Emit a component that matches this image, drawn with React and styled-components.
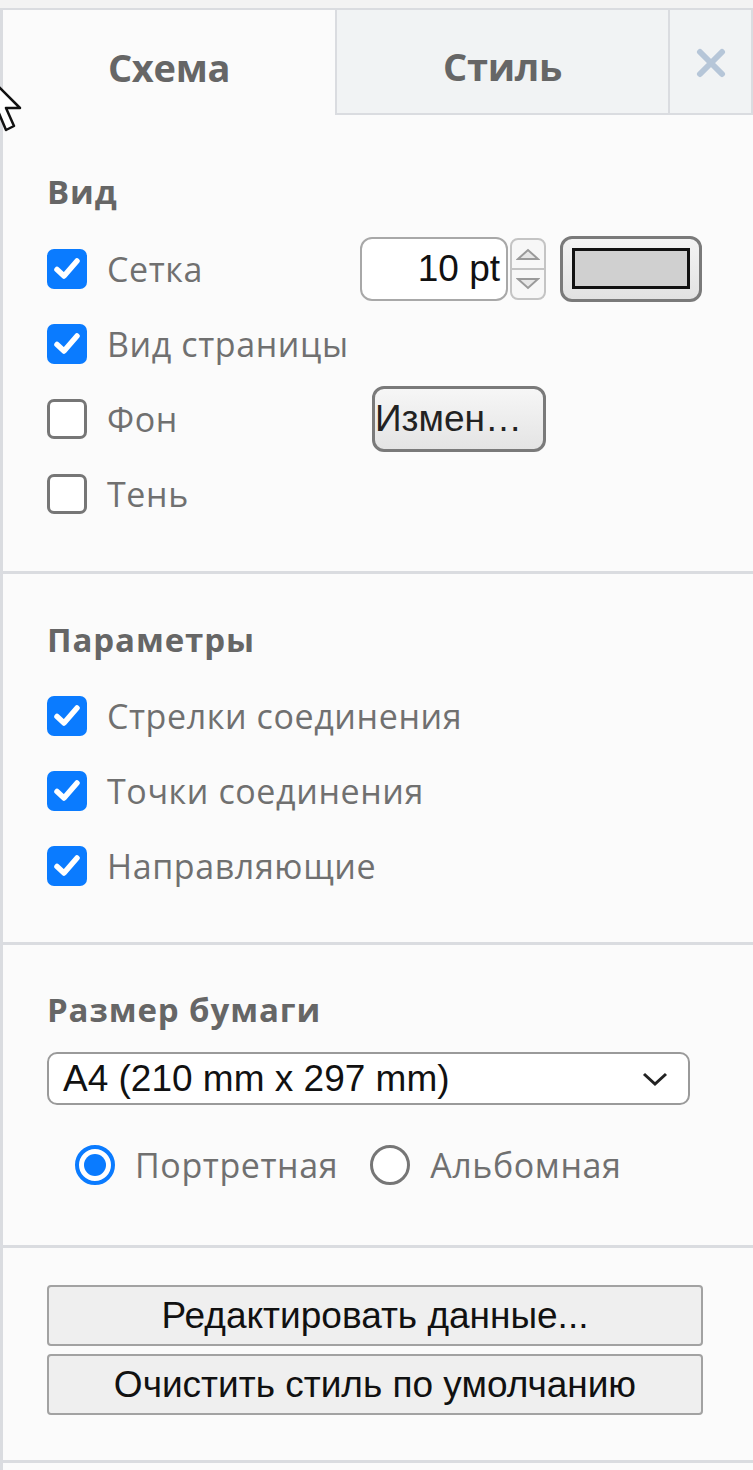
import React from 'react';
import styled, { createGlobalStyle } from 'styled-components';

const GlobalStyle = createGlobalStyle`
  html, body {
    margin: 0;
    padding: 0;
    background: #f3f3f3;
  }
  * { box-sizing: border-box; }
`;

const Page = styled.div`
  position: relative;
  width: 753px;
  height: 1470px;
  padding-top: 8px;
  background: #f3f3f3;
  overflow: hidden;
`;

const Panel = styled.div`
  height: 100%;
  background: #fbfbfb;
  border-top: 2px solid #dadce0;
  border-left: 3px solid #dadce0;
  font-family: "Open Sans", "Noto Sans", sans-serif;
`;

const Tabs = styled.div`
  display: flex;
  height: 105px;
`;

const Tab = styled.div`
  display: flex;
  align-items: center;
  justify-content: center;
  width: ${p => p.$w}px;
  padding-top: 8px;
  font-size: 38px;
  font-weight: 700;
  color: #666;
  letter-spacing: -0.3px;
  background: ${p => (p.$active ? '#fbfbfb' : '#f1f3f4')};
  border-left: ${p => (p.$active ? 'none' : '2px solid #dadce0')};
  border-bottom: ${p => (p.$active ? 'none' : '2px solid #dadce0')};
`;

const CloseTab = styled(Tab)`
  flex: 1;
  padding-top: 2px;
  border-right: 2px solid #dadce0;
`;

const Section = styled.div`
  padding: ${p => p.$top}px 0 ${p => p.$bottom}px 44px;
  border-bottom: 3px solid #dadce0;
`;

const Heading = styled.div`
  height: 40px;
  line-height: 40px;
  font-size: 33px;
  font-weight: 700;
  letter-spacing: 0.9px;
  color: #666;
  margin-bottom: ${p => p.$gap}px;
`;

const Row = styled.div`
  display: flex;
  align-items: center;
  height: 75px;
`;

const CheckLabel = styled.label`
  display: flex;
  align-items: center;
  width: ${p => (p.$wide ? 'auto' : '313px')};
  font-size: 34px;
  letter-spacing: 0.6px;
  color: #707070;
`;

const Box = styled.span`
  display: flex;
  align-items: center;
  justify-content: center;
  width: 40px;
  height: 40px;
  border-radius: 7px;
  margin-right: 20px;
  flex-shrink: 0;
  background: ${p => (p.$on ? '#0a7bff' : '#fff')};
  border: ${p => (p.$on ? 'none' : '3px solid #767676')};
`;

const NumberBox = styled.div`
  width: 148px;
  height: 64px;
  border: 2px solid #a8a8a8;
  border-radius: 12px;
  background: #fff;
  display: flex;
  align-items: center;
  justify-content: flex-end;
  padding-right: 6px;
  font-family: "Liberation Sans", Arial, sans-serif;
  font-size: 37px;
  color: #111;
`;

const Spinner = styled.div`
  display: flex;
  flex-direction: column;
  width: 36px;
  height: 62px;
  margin-left: 2px;
  border: 2px solid #c4c4c4;
  border-radius: 8px;
  background: #f7f7f7;
  overflow: hidden;
`;

const SpinHalf = styled.div`
  flex: 1;
  display: flex;
  align-items: center;
  justify-content: center;
  border-top: ${p => (p.$down ? '2px solid #c4c4c4' : 'none')};
`;

const ColorButton = styled.div`
  width: 142px;
  height: 66px;
  margin-left: 14px;
  border: 3px solid #7a7a7a;
  border-radius: 12px;
  background: linear-gradient(#f4f4f4, #e2e2e2);
  display: flex;
  align-items: center;
  justify-content: center;
`;

const Swatch = styled.div`
  width: 118px;
  height: 41px;
  background: #d0d0d0;
  border: 3px solid #111;
`;

const SmallButton = styled.div`
  width: 174px;
  height: 66px;
  margin-left: 12px;
  border: 3px solid #7a7a7a;
  border-radius: 12px;
  background: linear-gradient(#f6f6f6, #e4e4e4);
  display: flex;
  align-items: center;
  padding-left: 0;
  font-family: "Liberation Sans", Arial, sans-serif;
  font-size: 37px;
  color: #222;
  white-space: nowrap;
  overflow: hidden;
`;

const Select = styled.div`
  width: 643px;
  height: 53px;
  border: 2px solid #9a9a9a;
  border-radius: 10px;
  background: #fff;
  display: flex;
  align-items: center;
  justify-content: space-between;
  padding: 0 20px 0 14px;
  font-family: "Liberation Sans", Arial, sans-serif;
  font-size: 37px;
  color: #111;
`;

const RadioRow = styled.div`
  display: flex;
  align-items: center;
  height: 60px;
  margin-top: 30px;
  padding-left: 28px;
`;

const RadioLabel = styled.label`
  display: flex;
  align-items: center;
  margin-right: 32px;
  font-size: 34px;
  letter-spacing: 0.6px;
  color: #707070;
`;

const Radio = styled.span`
  width: 40px;
  height: 40px;
  border-radius: 50%;
  margin-right: 20px;
  background: #fff;
  border: ${p => (p.$on ? '4px solid #0a7bff' : '3px solid #767676')};
  display: flex;
  align-items: center;
  justify-content: center;
  &::after {
    content: '';
    display: ${p => (p.$on ? 'block' : 'none')};
    width: 22px;
    height: 22px;
    border-radius: 50%;
    background: #0a7bff;
  }
`;

const Buttons = styled.div`
  display: flex;
  flex-direction: column;
  gap: 8px;
`;

const WideButton = styled.div`
  width: 656px;
  height: 61px;
  border: 2px solid #a2a2a2;
  border-radius: 4px;
  background: #efefef;
  display: flex;
  align-items: center;
  justify-content: center;
  font-family: "Liberation Sans", Arial, sans-serif;
  font-size: 37px;
  color: #111;
`;

const Cursor = styled.svg`
  position: absolute;
  left: -14px;
  top: 74px;
`;

const Check = () => (
  <svg width="30" height="30" viewBox="0 0 30 30">
    <path d="M5 15.5 L12 22 L25 7" fill="none" stroke="#fff" strokeWidth="5.5" strokeLinecap="round" strokeLinejoin="round" />
  </svg>
);

const CheckRow = ({ on, label, wide, children }) => (
  <Row>
    <CheckLabel $wide={wide}>
      <Box $on={on}>{on && <Check />}</Box>
      {label}
    </CheckLabel>
    {children}
  </Row>
);

export default function App() {
  return (
    <>
      <GlobalStyle />
      <Page>
        <Panel>
          <Tabs>
            <Tab $active $w={332}>Схема</Tab>
            <Tab $w={333}>Стиль</Tab>
            <CloseTab>
              <svg width="30" height="30" viewBox="0 0 30 30">
                <path d="M4 4 L26 26 M26 4 L4 26" stroke="#b6c6d8" strokeWidth="6" strokeLinecap="round" />
              </svg>
            </CloseTab>
          </Tabs>

          <Section $top={57} $bottom={40}>
            <Heading $gap={19}>Вид</Heading>
            <CheckRow on label="Сетка">
              <NumberBox>10 pt</NumberBox>
              <Spinner>
                <SpinHalf>
                  <svg width="24" height="14" viewBox="0 0 24 14">
                    <path d="M2 12 L12 3 L22 12 Z" fill="#e6e6e6" stroke="#9a9a9a" strokeWidth="2" />
                  </svg>
                </SpinHalf>
                <SpinHalf $down>
                  <svg width="24" height="14" viewBox="0 0 24 14">
                    <path d="M2 2 L12 11 L22 2 Z" fill="#e6e6e6" stroke="#9a9a9a" strokeWidth="2" />
                  </svg>
                </SpinHalf>
              </Spinner>
              <ColorButton>
                <Swatch />
              </ColorButton>
            </CheckRow>
            <CheckRow on wide label="Вид страницы" />
            <CheckRow label="Фон">
              <SmallButton>Измен…</SmallButton>
            </CheckRow>
            <CheckRow label="Тень" />
          </Section>

          <Section $top={46} $bottom={39}>
            <Heading $gap={18}>Параметры</Heading>
            <CheckRow on wide label="Стрелки соединения" />
            <CheckRow on wide label="Точки соединения" />
            <CheckRow on wide label="Направляющие" />
          </Section>

          <Section $top={45} $bottom={50}>
            <Heading $gap={22}>Размер бумаги</Heading>
            <Select>
              A4 (210 mm x 297 mm)
              <svg width="26" height="16" viewBox="0 0 26 16">
                <path d="M2 3 L13 13 L24 3" fill="none" stroke="#222" strokeWidth="3" />
              </svg>
            </Select>
            <RadioRow>
              <RadioLabel>
                <Radio $on />
                Портретная
              </RadioLabel>
              <RadioLabel>
                <Radio />
                Альбомная
              </RadioLabel>
            </RadioRow>
          </Section>

          <Section $top={37} $bottom={45}>
            <Buttons>
              <WideButton>Редактировать данные...</WideButton>
              <WideButton>Очистить стиль по умолчанию</WideButton>
            </Buttons>
          </Section>
        </Panel>
        <Cursor width="44" height="64" viewBox="0 0 44 64">
          <path d="M2 2 L2 46 L12 37 L20 56 L28 52 L20 34 L34 34 Z" fill="#fff" stroke="#111" strokeWidth="2.5" strokeLinejoin="round" />
        </Cursor>
      </Page>
    </>
  );
}
